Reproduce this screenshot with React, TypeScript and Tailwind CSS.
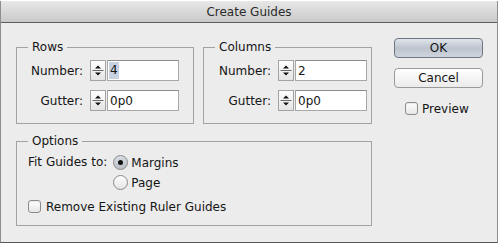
const font = { fontFamily: '"DejaVu Sans", "Liberation Sans", sans-serif' };

const Spinner = () => (
  <div className="w-[16px] h-[21px] border border-[#a3a3a3] bg-linear-to-b from-white to-[#e4e4e4]">
    <svg width="14" height="19" viewBox="0 0 14 19" className="block">
      <path d="M4 7.5 L7 4.5 L10 7.5 Z" fill="#111" />
      <line x1="1.5" y1="9.5" x2="12.5" y2="9.5" stroke="#6a6a6a" />
      <path d="M4 11.5 L7 14.5 L10 11.5 Z" fill="#111" />
    </svg>
  </div>
);

type FieldProps = { label: string; value: string; selected?: boolean };

const Field = ({ label, value, selected }: FieldProps) => (
  <div className="flex items-center h-[21px]">
    <span className="w-[52px] text-right">{label}</span>
    <div className="ml-[7px]">
      <Spinner />
    </div>
    <div className="ml-[1px] w-[72px] h-[21px] border border-[#a8a8a8] border-t-[#8c8c8c] bg-white pl-[1px] flex items-center">
      <span className={selected ? "bg-[#c6d2e1] px-[1px] leading-[17px]" : "px-[1px]"}>{value}</span>
    </div>
  </div>
);

const Group = ({ title, className, children }: { title: string; className: string; children: React.ReactNode }) => (
  <fieldset className={"border border-[#a2a2a2] " + className}>
    <legend className="ml-[11px] px-[4px] leading-[14px]">{title}</legend>
    {children}
  </fieldset>
);

const Checkbox = () => (
  <div className="w-[13px] h-[13px] rounded-[3px] border border-[#8c8c8c] bg-linear-to-b from-white to-[#e6e6e6] shadow-[inset_0_1px_1px_rgba(0,0,0,0.08)]" />
);

const Radio = ({ on }: { on?: boolean }) => (
  <div
    className={
      "w-[15px] h-[15px] rounded-full border border-[#8a8a8a] flex items-center justify-center " +
      (on ? "bg-linear-to-b from-[#d9dde3] to-[#b9bec6]" : "bg-linear-to-b from-white to-[#e4e4e4]")
    }
  >
    {on && <div className="w-[5px] h-[5px] rounded-full bg-[#111]" />}
  </div>
);

const App = () => {
  return (
    <div className="w-[498px] h-[244px] bg-white text-[12px] text-[#151515]" style={font}>
      <div className="mt-[1px] h-[242px] border-x border-b border-x-[#8e8e8e] border-b-[#555] bg-[#ececec] flex flex-col">
        <div className="h-[22px] border-b border-[#5e5e5e] bg-linear-to-b from-[#e8e8e8] to-[#c9c9c9] flex items-center justify-center text-[#2b2b2b] leading-none">
          Create Guides
        </div>
        <div className="flex pl-[15px] pt-[15px]">
          <div className="w-[356px] mt-[2px] flex flex-col">
            <div className="flex gap-[9px]">
              <Group title="Rows" className="w-[178px]">
                <div className="flex flex-col gap-[9px] pl-[14px] pt-[6px] pb-[12px]">
                  <Field label="Number:" value="4" selected />
                  <Field label="Gutter:" value="0p0" />
                </div>
              </Group>
              <Group title="Columns" className="w-[169px]">
                <div className="flex flex-col gap-[9px] pl-[15px] pt-[6px] pb-[12px]">
                  <Field label="Number:" value="2" />
                  <Field label="Gutter:" value="0p0" />
                </div>
              </Group>
            </div>
            <Group title="Options" className="mt-[10px]">
              <div className="pl-[11px] pt-[7px] pb-[11px]">
                <div className="flex">
                  <span className="h-[15px] leading-[15px]">Fit Guides to:</span>
                  <div className="ml-[6px] flex flex-col gap-[5px]">
                    <label className="flex items-center gap-[3px] h-[15px]">
                      <Radio on />
                      <span>Margins</span>
                    </label>
                    <label className="flex items-center gap-[3px] h-[15px]">
                      <Radio />
                      <span>Page</span>
                    </label>
                  </div>
                </div>
                <label className="mt-[9px] flex items-center gap-[5px] h-[15px]">
                  <Checkbox />
                  <span>Remove Existing Ruler Guides</span>
                </label>
              </div>
            </Group>
          </div>
          <div className="ml-[22px] w-[89px] flex flex-col">
            <button className="h-[20px] rounded-[4px] border border-[#6f7683] bg-linear-to-b from-[#e1e5eb] via-[#bcc4cf] to-[#cfd5dd] leading-none">
              OK
            </button>
            <button className="mt-[10px] h-[20px] rounded-[4px] border border-[#9a9a9a] bg-linear-to-b from-white to-[#ebebeb] leading-none">
              Cancel
            </button>
            <label className="mt-[13px] ml-[11px] flex items-center gap-[4px] h-[15px]">
              <Checkbox />
              <span>Preview</span>
            </label>
          </div>
        </div>
      </div>
    </div>
  );
};

export default App;
